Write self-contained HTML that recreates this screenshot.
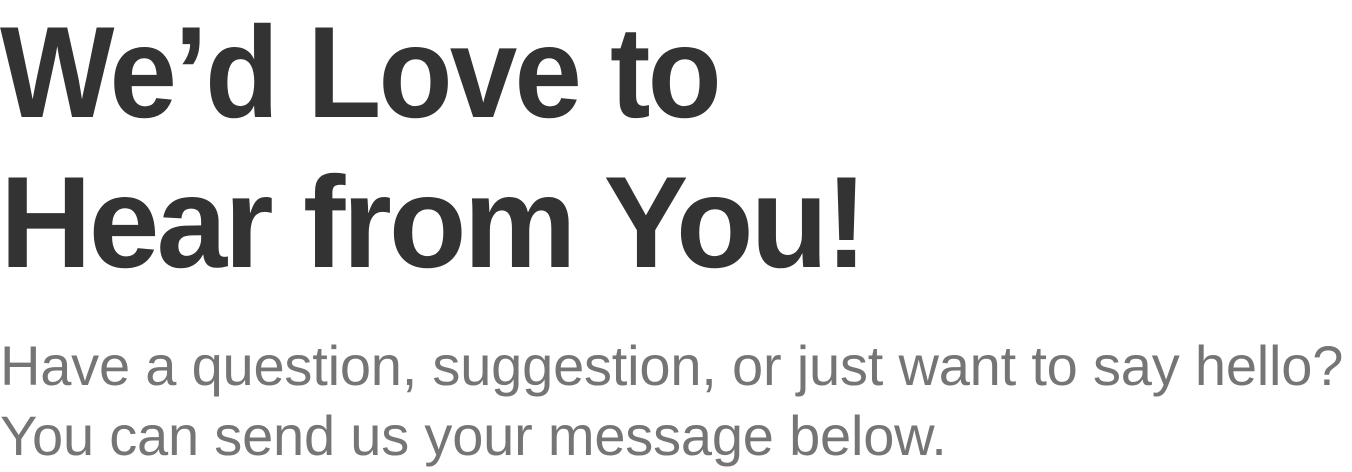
<!DOCTYPE html>
<html><head><meta charset="utf-8"><style>
html,body{margin:0;padding:0;background:#fff;width:1352px;height:472px;overflow:hidden}
h1{margin:-3px 0 0 0;font:bold 130px/150px "Liberation Sans",sans-serif;color:#333;letter-spacing:-3px}
h1 span{display:block;white-space:nowrap;transform-origin:0 0}
.l1{transform:scaleX(0.933)}
.l2{transform:scaleX(0.977)}
p{margin:34px 0 0 0;font:56px/70px "Liberation Sans",sans-serif;color:#757575;white-space:nowrap;letter-spacing:-0.2px}
</style></head><body>
<h1><span class="l1">We’d Love to</span><span class="l2">Hear from You!</span></h1>
<p>Have a question, suggestion, or just want to say hello?<br>You can send us your message below.</p>
</body></html>
